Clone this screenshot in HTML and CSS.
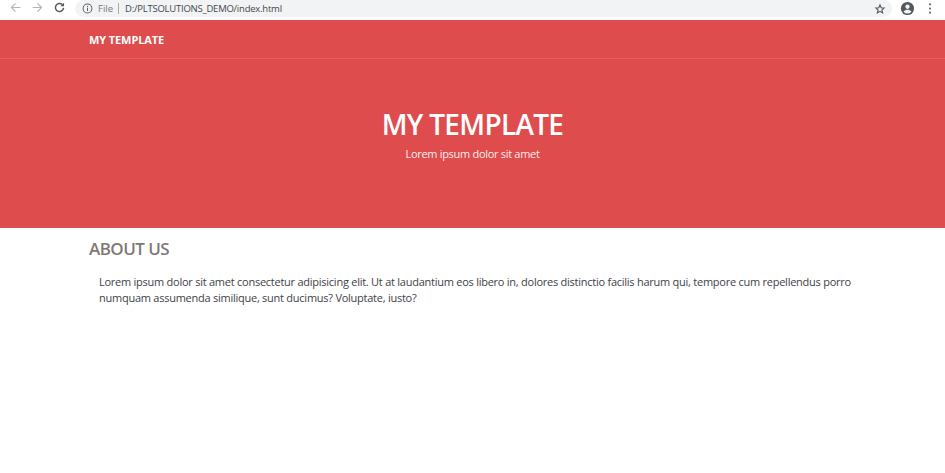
FILE: index.html
```html
<!DOCTYPE html>
<html lang="en">
<head>
<meta charset="utf-8">
<title>My Template</title>
<link rel="stylesheet" href="styles.css">
</head>
<body>
<div class="chrome">
  <div class="nav-icons">
    <svg class="ic" viewBox="0 0 16 16"><path d="M14 8H3M8 3 3 8l5 5" fill="none" stroke="#b4b6b9" stroke-width="1.5"/></svg>
    <svg class="ic" viewBox="0 0 16 16"><path d="M2 8h11M8 3l5 5-5 5" fill="none" stroke="#b4b6b9" stroke-width="1.5"/></svg>
    <svg class="ic" viewBox="0 0 16 16"><path d="M13 8.5A5 5 0 1 1 11.5 4.4" fill="none" stroke="#55585c" stroke-width="1.8"/><path d="M13.6 2v4.6H9z" fill="#55585c"/></svg>
  </div>
  <div class="omnibox">
    <svg class="info" viewBox="0 0 12 12"><circle cx="6" cy="6" r="4.8" fill="none" stroke="#5f6368" stroke-width="1.1"/><path d="M6 5.2v3.4M6 3.2v1.2" stroke="#5f6368" stroke-width="1.1"/></svg>
    <span class="scheme">File</span>
    <span class="sep"></span>
    <span class="url">D:/PLTSOLUTIONS_DEMO/index.html</span>
    <svg class="star" viewBox="0 0 14 14"><path d="M7 2.200 8.400 5.500l3.500.3-2.600 2.300.8 3.400L7 9.700l-3.100 1.800.8-3.400-2.600-2.300 3.500-.3z" fill="none" stroke="#55585c" stroke-width="1.300"/></svg>
  </div>
  <div class="chrome-end">
    <svg class="avatar" viewBox="0 0 16 16"><circle cx="8" cy="8" r="7" fill="#55585c"/><circle cx="8" cy="6.100" r="2.300" fill="#f1f3f4"/><path d="M3.800 11.400c1-1.500 2.700-2.100 4.200-2.100s3.200.6 4.200 2.100A5.500 5.500 0 0 1 8 13.400a5.500 5.500 0 0 1-4.200-2z" fill="#f1f3f4"/></svg>
    <svg class="dots" viewBox="0 0 4 14"><circle cx="2" cy="2.500" r="1.200" fill="#6a6d71"/><circle cx="2" cy="7" r="1.200" fill="#6a6d71"/><circle cx="2" cy="11.500" r="1.200" fill="#6a6d71"/></svg>
  </div>
</div>
<header class="site-header">
  <nav class="topbar"><a class="brand">MY TEMPLATE</a></nav>
  <div class="hero">
    <h1 class="hero-title">MY TEMPLATE</h1>
    <p class="hero-sub">Lorem ipsum dolor sit amet</p>
  </div>
</header>
<main class="content">
  <h2 class="section-title">ABOUT US</h2>
  <p class="section-text">Lorem ipsum dolor sit amet consectetur adipisicing elit. Ut at laudantium eos libero in, dolores distinctio facilis harum qui, tempore cum repellendus porro numquam assumenda similique, sunt ducimus? Voluptate, iusto?</p>
</main>
</body>
</html>
```
FILE: styles.css
```css
* { box-sizing: border-box; }
html, body { margin: 0; padding: 0; }
body {
  width: 945px;
  height: 473px;
  overflow: hidden;
  background: #fff;
  font-family: "Open Sans", "Noto Sans", sans-serif;
}
.chrome {
  display: flex;
  align-items: center;
  height: 20px;
  background: #fff;
}
.nav-icons {
  display: flex;
  align-items: center;
  gap: 9px;
  padding-left: 9px;
  width: 75px;
  margin-top: -5px;
}
.ic { width: 13px; height: 13px; }
.omnibox {
  display: flex;
  align-items: center;
  width: 817px;
  height: 17px;
  margin-top: -3px;
  background: #f1f3f4;
  border-radius: 9px;
  padding: 0 6px 0 7px;
  font-size: 9.500px;
  color: #45484c;
}
.info { width: 11px; height: 11px; }
.scheme { margin-left: 5px; color: #777a7e; }
.sep { width: 1px; height: 11px; background: #a9abad; margin: 0 6px 0 5px; }
.url { flex: 1; letter-spacing: -0.230px; }
.star { width: 12px; height: 12px; }
.chrome-end {
  display: flex;
  align-items: center;
  gap: 13px;
  padding-left: 8px;
  margin-top: -3px;
}
.avatar { width: 15px; height: 15px; }
.dots { width: 4px; height: 13px; }
.site-header {
  height: 208px;
  background: #de4c4d;
  color: #fff;
}
.topbar {
  height: 39px;
  padding: 1px 0 0 89px;
  display: flex;
  align-items: center;
  border-bottom: 1px solid #e4605f;
}
.brand { font-size: 11px; font-weight: 700; letter-spacing: -0.100px; }
.hero {
  display: flex;
  flex-direction: column;
  align-items: center;
  padding-top: 46px;
}
.hero-title {
  margin: 0;
  font-size: 28px;
  line-height: 38px;
  font-weight: 600;
  letter-spacing: -0.700px;
}
.hero-sub {
  margin: 3px 0 0;
  font-size: 11px;
  line-height: 16px;
  color: #fdeeee;
  letter-spacing: -0.300px;
}
.content { padding: 9px 88px 0 89px; }
.section-title {
  margin: 0;
  font-size: 17px;
  line-height: 23px;
  font-weight: 600;
  color: #7f7876;
  letter-spacing: -0.550px;
}
.section-text {
  margin: 14px 0 0 10px;
  font-size: 11px;
  line-height: 16px;
  color: #3e4149;
  letter-spacing: -0.250px;
}
```
